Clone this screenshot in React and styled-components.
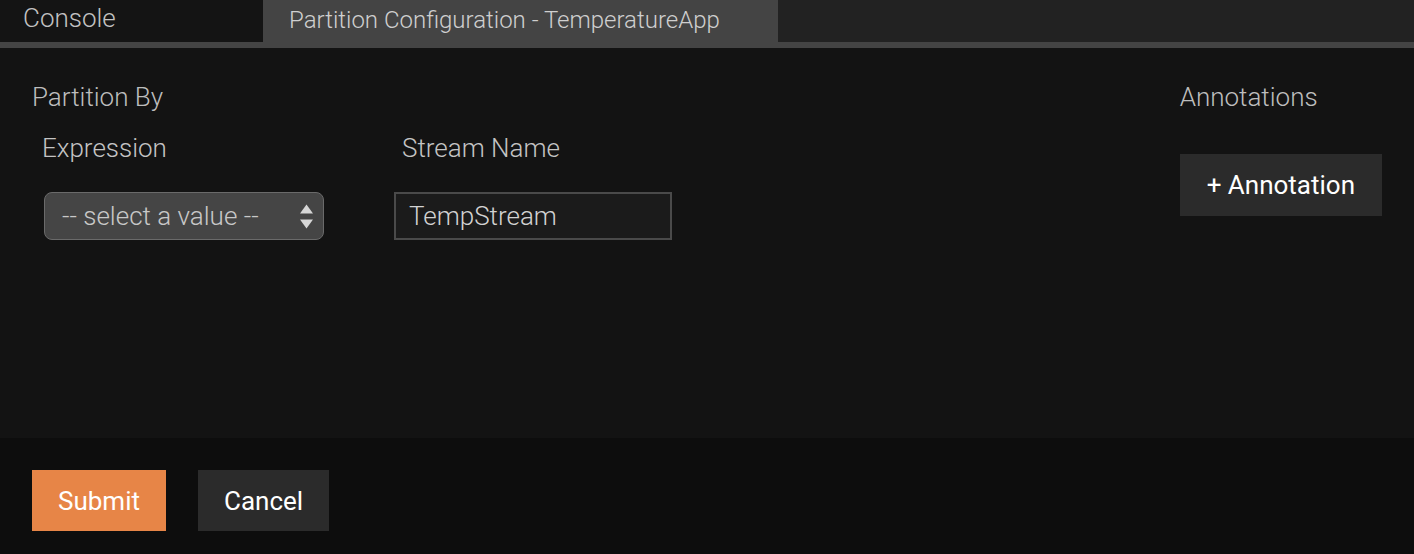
import React from "react";
import styled, { createGlobalStyle } from "styled-components";

const GlobalStyle = createGlobalStyle`
  html, body {
    margin: 0;
    padding: 0;
    background: #131313;
    font-family: Roboto, "Liberation Sans", sans-serif;
  }
`;

const Page = styled.div`
  width: 1414px;
  height: 554px;
  display: flex;
  flex-direction: column;
  background: #131313;
  overflow: hidden;
`;

const TabBar = styled.div`
  height: 42px;
  display: flex;
  background: #222222;
  border-bottom: 6px solid #444444;
`;

const Tab = styled.div`
  width: ${(p) => p.width}px;
  display: flex;
  align-items: center;
  padding-left: ${(p) => (p.active ? 26 : 23)}px;
  padding-bottom: ${(p) => (p.active ? 2 : 6)}px;
  box-sizing: border-box;
  background: ${(p) => (p.active ? "#444444" : "#141414")};
  color: ${(p) => (p.active ? "#cfcfcf" : "#c2c2c2")};
  font-size: ${(p) => (p.active ? 24 : 26)}px;
  font-weight: 300;
  white-space: nowrap;
`;

const Main = styled.div`
  flex: 1;
  display: flex;
  justify-content: space-between;
  padding: 34px 32px 0 32px;
`;

const Section = styled.div`
  display: flex;
  flex-direction: column;
`;

const Heading = styled.div`
  font-size: 26px;
  font-weight: 300;
  color: #bdbdbd;
  line-height: 30px;
`;

const Fields = styled.div`
  display: flex;
  gap: 70px;
  margin-top: 21px;
  padding-left: 10px;
`;

const Field = styled.div`
  display: flex;
  flex-direction: column;
`;

const Label = styled.div`
  font-size: 26px;
  font-weight: 300;
  color: #c4c4c4;
  line-height: 30px;
  margin-left: ${(p) => p.indent || 0}px;
  margin-bottom: 29px;
`;

const SelectBox = styled.div`
  width: 280px;
  height: 48px;
  box-sizing: border-box;
  margin-left: 2px;
  border: 1.5px solid #6a6a6a;
  border-radius: 8px;
  background: #454545;
  display: flex;
  align-items: center;
  justify-content: space-between;
  padding: 0 10px 0 17px;
  color: #c8c8c8;
  font-size: 26px;
  font-weight: 300;
`;

const Arrows = styled.svg`
  width: 13px;
  height: 25px;
`;

const TextInput = styled.div`
  width: 278px;
  height: 48px;
  box-sizing: border-box;
  border: 2px solid #4a4a4a;
  background: #1b1b1b;
  display: flex;
  align-items: center;
  padding-left: 13px;
  color: #d2d2d2;
  font-size: 26px;
  font-weight: 300;
`;

const Button = styled.button`
  height: ${(p) => p.h || 61}px;
  padding: 0 ${(p) => p.px || 26}px;
  border: none;
  background: ${(p) => (p.primary ? "#e78547" : "#2b2b2b")};
  color: #ffffff;
  font-family: Roboto, "Liberation Sans", sans-serif;
  font-size: 26px;
  font-weight: 400;
  cursor: pointer;
`;

const AnnotationButton = styled(Button)`
  margin-top: 42px;
`;

const Footer = styled.div`
  height: 116px;
  background: #0d0d0d;
  display: flex;
  gap: 32px;
  padding: 32px 32px 0 32px;
  box-sizing: border-box;
  align-items: flex-start;
`;

const App = () => {
  return (
    <Page>
      <GlobalStyle />
      <TabBar>
        <Tab width={263}>Console</Tab>
        <Tab width={515} active>
          Partition Configuration - TemperatureApp
        </Tab>
      </TabBar>
      <Main>
        <Section>
          <Heading>Partition By</Heading>
          <Fields>
            <Field>
              <Label>Expression</Label>
              <SelectBox>
                <span>-- select a value --</span>
                <Arrows viewBox="0 0 13 25">
                  <path d="M6.5 0.5 L13 9.5 H0 Z" fill="#d6d6d6" />
                  <path d="M6.5 24.5 L13 15.5 H0 Z" fill="#d6d6d6" />
                </Arrows>
              </SelectBox>
            </Field>
            <Field>
              <Label indent={8}>Stream Name</Label>
              <TextInput>TempStream</TextInput>
            </Field>
          </Fields>
        </Section>
        <Section>
          <Heading>Annotations</Heading>
          <AnnotationButton h={62} px={27}>
            + Annotation
          </AnnotationButton>
        </Section>
      </Main>
      <Footer>
        <Button primary>Submit</Button>
        <Button>Cancel</Button>
      </Footer>
    </Page>
  );
};

export default App;
